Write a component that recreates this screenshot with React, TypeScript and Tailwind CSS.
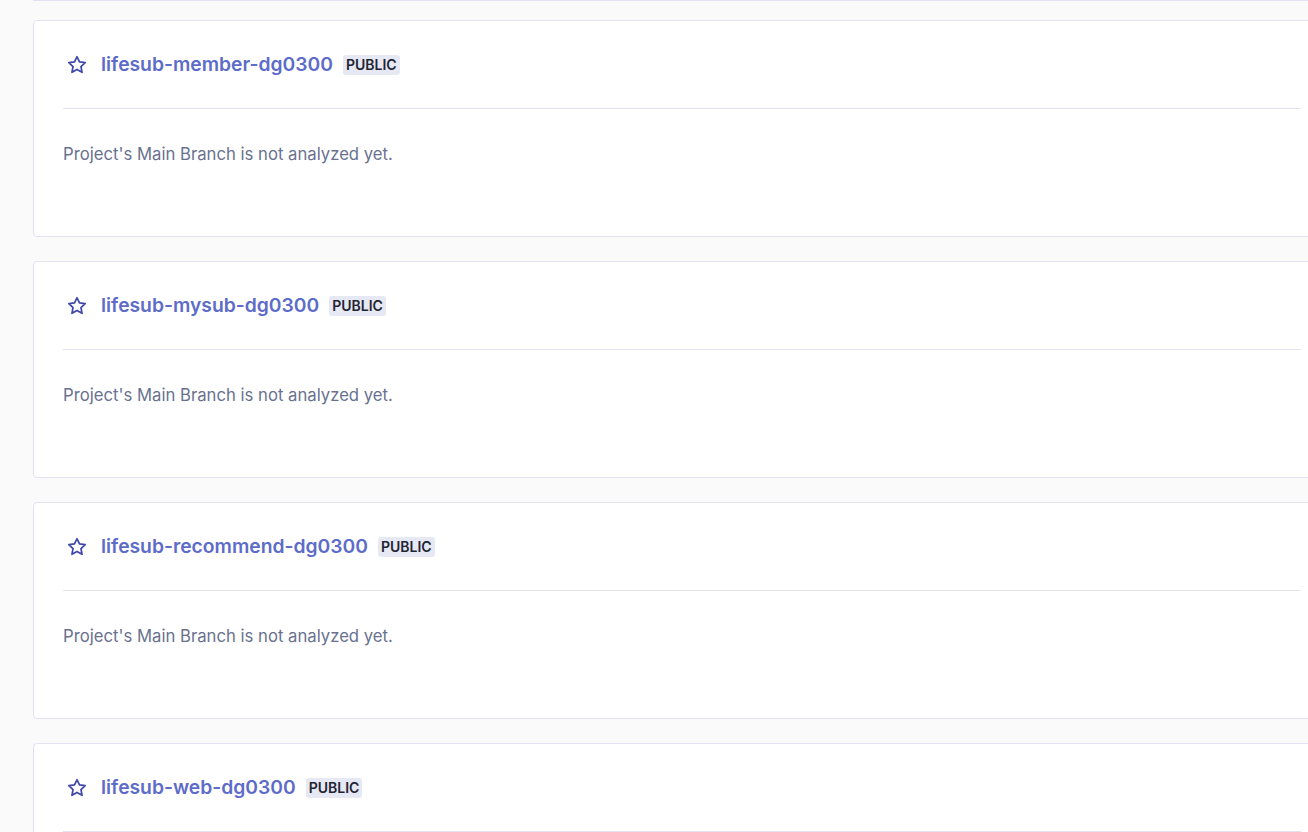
const projects = [
  "lifesub-member-dg0300",
  "lifesub-mysub-dg0300",
  "lifesub-recommend-dg0300",
  "lifesub-web-dg0300",
];

function StarIcon() {
  return (
    <svg width="22" height="22" viewBox="0 0 24 24" fill="none" stroke="#3f48a8" strokeWidth="1.9" strokeLinejoin="round">
      <path d="M12 3l2.7 5.7 6.2.8-4.55 4.3 1.15 6.15L12 16.9l-5.5 3.05 1.15-6.15L3.1 9.5l6.2-.8z" />
    </svg>
  );
}

function ProjectCard({ name }: { name: string }) {
  return (
    <div className="w-[1298px] h-[217px] shrink-0 rounded border border-[#e1e3f1] bg-white px-[29px]">
      <div className="flex h-[88px] items-center border-b border-[#e1e3f1]">
        <span className="ml-[3px] flex h-[22px] w-[22px] items-center justify-center">
          <StarIcon />
        </span>
        <a className="ml-[13px] text-[19.3px] font-semibold text-[#5d6cc9]">{name}</a>
        <span className="ml-[10px] rounded-[3px] bg-[#e6e8f3] px-[3px] py-[2px] text-[14px] font-semibold leading-[16px] text-[#1f2433]">
          PUBLIC
        </span>
      </div>
      <p className="pt-[33px] text-[16.7px] leading-6 text-[#69718f]">Project's Main Branch is not analyzed yet.</p>
    </div>
  );
}

export default function App() {
  return (
    <div className="h-[832px] overflow-hidden bg-[#fafafb] pl-[33px]" style={{ fontFamily: "Inter, 'Noto Sans', sans-serif" }}>
      <div className="h-px bg-[#e1e3f1]" />
      <div className="mt-[19px] flex flex-col gap-6">
        {projects.map((p) => (
          <ProjectCard key={p} name={p} />
        ))}
      </div>
    </div>
  );
}
